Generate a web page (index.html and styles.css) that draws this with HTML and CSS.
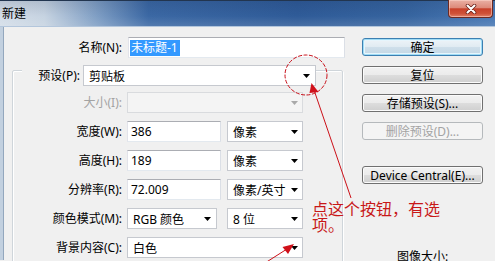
FILE: index.html
```html
<!DOCTYPE html>
<html lang="zh-CN">
<head>
<meta charset="utf-8">
<title>新建</title>
<link rel="stylesheet" href="styles.css">
</head>
<body>
<div class="window">
  <div class="titlebar">
    <span class="title">新建</span>
    <div class="close">
      <svg width="14" height="10" viewBox="0 0 14 10"><path class="x-shadow" d="M3.5 1.5 L10.5 8.5 M10.5 1.5 L3.5 8.5"/><path class="x-mark" d="M3.5 1.5 L10.5 8.5 M10.5 1.5 L3.5 8.5"/></svg>
    </div>
  </div>
  <div class="body">
    <div class="form">
      <div class="row name-row">
        <label class="lbl name-lbl">名称(N):</label>
        <div class="field text name-field"><span class="selected">未标题-1</span></div>
      </div>
      <div class="group">
        <div class="row preset-row">
          <label class="lbl preset-lbl">预设(P):</label>
          <div class="field combo preset-combo"><span class="val">剪贴板</span><svg class="arrow" width="7" height="4" viewBox="0 0 7 4"><path d="M0 0H7L3.5 4Z"/></svg></div>
        </div>
        <div class="rows">
          <div class="row">
            <label class="lbl disabled">大小(I):</label>
            <div class="field combo wide disabled-field"><span class="val"></span><svg class="arrow" width="7" height="4" viewBox="0 0 7 4"><path d="M0 0H7L3.5 4Z"/></svg></div>
          </div>
          <div class="row">
            <label class="lbl">宽度(W):</label>
            <div class="field text num">386</div>
            <div class="field combo unit"><span class="val">像素</span><svg class="arrow" width="7" height="4" viewBox="0 0 7 4"><path d="M0 0H7L3.5 4Z"/></svg></div>
          </div>
          <div class="row">
            <label class="lbl">高度(H):</label>
            <div class="field text num">189</div>
            <div class="field combo unit"><span class="val">像素</span><svg class="arrow" width="7" height="4" viewBox="0 0 7 4"><path d="M0 0H7L3.5 4Z"/></svg></div>
          </div>
          <div class="row">
            <label class="lbl">分辨率(R):</label>
            <div class="field text num">72.009</div>
            <div class="field combo unit"><span class="val">像素/英寸</span><svg class="arrow" width="7" height="4" viewBox="0 0 7 4"><path d="M0 0H7L3.5 4Z"/></svg></div>
          </div>
          <div class="row">
            <label class="lbl">颜色模式(M):</label>
            <div class="field combo mode"><span class="val">RGB 颜色</span><svg class="arrow" width="7" height="4" viewBox="0 0 7 4"><path d="M0 0H7L3.5 4Z"/></svg></div>
            <div class="field combo unit bits"><span class="val">8 位</span><svg class="arrow" width="7" height="4" viewBox="0 0 7 4"><path d="M0 0H7L3.5 4Z"/></svg></div>
          </div>
          <div class="row">
            <label class="lbl">背景内容(C):</label>
            <div class="field combo wide"><span class="val">白色</span><svg class="arrow" width="7" height="4" viewBox="0 0 7 4"><path d="M0 0H7L3.5 4Z"/></svg></div>
          </div>
        </div>
      </div>
    </div>
    <div class="buttons">
      <div class="btn default">确定</div>
      <div class="btn">复位</div>
      <div class="btn">存储预设(S)...</div>
      <div class="btn disabled-btn">删除预设(D)...</div>
      <div class="btn device">Device Central(E)...</div>
      <div class="size-title">图像大小:</div>
    </div>
  </div>

  <svg class="annot" width="495" height="261" viewBox="0 0 495 261">
    <ellipse cx="306" cy="75" rx="21" ry="20" class="ring"/>
    <line x1="351" y1="198" x2="314" y2="90" class="pointer"/>
    <path d="M311.5 83 L318.5 92 L309.5 93 Z" class="head"/>
    <line x1="265" y1="263" x2="287" y2="249" class="pointer"/>
    <path d="M294 244 L288 254 L282.5 247 Z" class="head"/>
  </svg>
  <div class="note"><span class="note-line">点这个按钮，有选</span><span class="note-line">项。</span></div>
</div>
</body>
</html>
```

FILE: styles.css
```css
* { box-sizing: border-box; }
html, body { margin: 0; padding: 0; }
body {
  background: #f0f0f0;
  font-family: "Noto Sans", "Noto Sans CJK SC", sans-serif;
  font-size: 12px;
  color: #000;
}
.window {
  position: relative;
  width: 495px;
  height: 261px;
  overflow: hidden;
  background: #f0f0f0;
}

/* title bar */
.titlebar {
  height: 27px;
  display: flex;
  align-items: flex-start;
  border-top: 1px solid #22354f;
  border-bottom: 1px solid #b3c6dc;
  background:
    linear-gradient(to bottom, rgba(10,25,60,0.12) 0%, rgba(255,255,255,0) 60%, rgba(255,255,255,0.12) 100%),
    linear-gradient(to right, #d3dde8 0%, #c6d3e1 9%, #7c9cc3 20%, #3b68a4 30%, #2f5b98 60%, #36649f 82%, #4878b4 100%);
}
.title {
  margin-top: 6px;
  margin-left: 2px;
  line-height: 14px;
  font-size: 12px;
  color: #000;
}
.close {
  margin-left: auto;
  margin-right: 2px;
  margin-top: -1px;
  width: 45px;
  height: 18px;
  display: flex;
  align-items: center;
  justify-content: center;
  border: 1px solid #6d2a22;
  border-top: none;
  border-radius: 0 0 4px 4px;
  background: linear-gradient(to bottom, #eab0a4 0%, #dd8a7a 45%, #c8402a 52%, #cf5238 80%, #e0826a 100%);
  box-shadow: inset 0 0 0 1px rgba(255,220,210,0.5);
}
.x-shadow { stroke: #6a2018; stroke-width: 3.6; stroke-linecap: round; fill: none; }
.x-mark { stroke: #ffffff; stroke-width: 2.1; stroke-linecap: round; fill: none; }

/* body */
.body {
  display: flex;
  align-items: flex-start;
  height: 233px;
  border-left: 3px solid #c2d0df;
  box-shadow: inset 1px 0 0 #93a7bd;
}
.form {
  width: 342px;
  padding-top: 10px;
}
.row {
  display: flex;
  align-items: center;
  height: 21px;
  gap: 5px;
}
.lbl {
  flex: none;
  text-align: right;
  white-space: nowrap;
  line-height: 21px;
}
.lbl.disabled { color: #a3a3a3; }
.name-row { gap: 6px; }
.name-lbl { width: 119px; }
.field {
  height: 21px;
  background: #fff;
  display: flex;
  align-items: center;
  white-space: nowrap;
}
.text {
  border: 1px solid;
  border-color: #abadb3 #dbdfe6 #e3e9ef #e2e3ea;
  padding-left: 3px;
}
.name-field { width: 217px; padding-left: 1px; }
.selected {
  display: inline-block;
  height: 16px;
  line-height: 16px;
  padding: 0 2px 0 1px;
  background: #3399ff;
  color: #fff;
}
.combo {
  border: 1px solid #c6c9cf;
  padding: 0 4px 0 5px;
}
.combo .val { flex: 1; }
.arrow { flex: none; fill: #000; }

/* group box */
.group {
  margin-left: 9px;
  margin-top: 12px;
  width: 331px;
  height: 200px;
  border: 1px solid #cfd5da;
  border-radius: 2px;
  box-shadow: inset 1px 1px 0 #fff, 1px 1px 0 #fff;
}
.preset-row {
  margin-top: -6px;
  margin-left: 9px;
  gap: 0;
}
.preset-lbl {
  width: 61px;
  padding-right: 3px;
  background: #f0f0f0;
}
.preset-combo { width: 233px; padding-right: 5px; }
.rows {
  margin-top: 6px;
  display: flex;
  flex-direction: column;
  gap: 8px;
}
.rows .lbl { width: 109px; }
.wide { width: 176px; }
.disabled-field { background: #f4f4f4; border-color: #d9dbde; }
.disabled-field .arrow { fill: #a9a9a9; }
.num { width: 94px; }
.unit { width: 76px; margin-left: 1px; }
.mode { width: 90px; padding-right: 5px; }
.bits { margin-left: 5px; }

/* buttons */
.buttons {
  margin-left: 17px;
  width: 121px;
  padding-top: 11px;
  display: flex;
  flex-direction: column;
  gap: 10px;
}
.btn {
  height: 18px;
  border: 1px solid #707070;
  border-radius: 3px;
  display: flex;
  align-items: center;
  justify-content: center;
  white-space: nowrap;
  background: linear-gradient(to bottom, #f2f2f2 0%, #ebebeb 50%, #dddddd 51%, #cfcfcf 100%);
  box-shadow: inset 0 0 0 1px #fbfbfb;
}
.btn.default {
  border-color: #3c7fb1;
  background: linear-gradient(to bottom, #eef4f8 0%, #e0ebf2 50%, #cfdfea 51%, #c2d7e5 100%);
  box-shadow: inset 0 0 0 1px #9fdcf6, inset 0 0 0 2px #e6f5fc;
}
.btn.disabled-btn {
  border-color: #b5b9bc;
  background: #f4f4f4;
  color: #a3a3a3;
  box-shadow: none;
}
.btn.device { margin-top: 16px; }
.size-title {
  margin-top: 56px;
  text-align: center;
  line-height: 14px;
}

/* annotation overlay */
.annot {
  position: absolute;
  left: 0;
  top: 0;
  pointer-events: none;
}
.ring { fill: none; stroke: #c8101a; stroke-width: 1; stroke-dasharray: 4 1.5; }
.pointer { stroke: #cc1018; stroke-width: 1; }
.head { fill: #d0101a; }
.note {
  position: absolute;
  left: 312px;
  top: 200px;
  font-family: "Noto Sans CJK SC", sans-serif;
  font-size: 16px;
  line-height: 16px;
  color: #c81818;
}
.note-line { display: block; white-space: nowrap; }
```
